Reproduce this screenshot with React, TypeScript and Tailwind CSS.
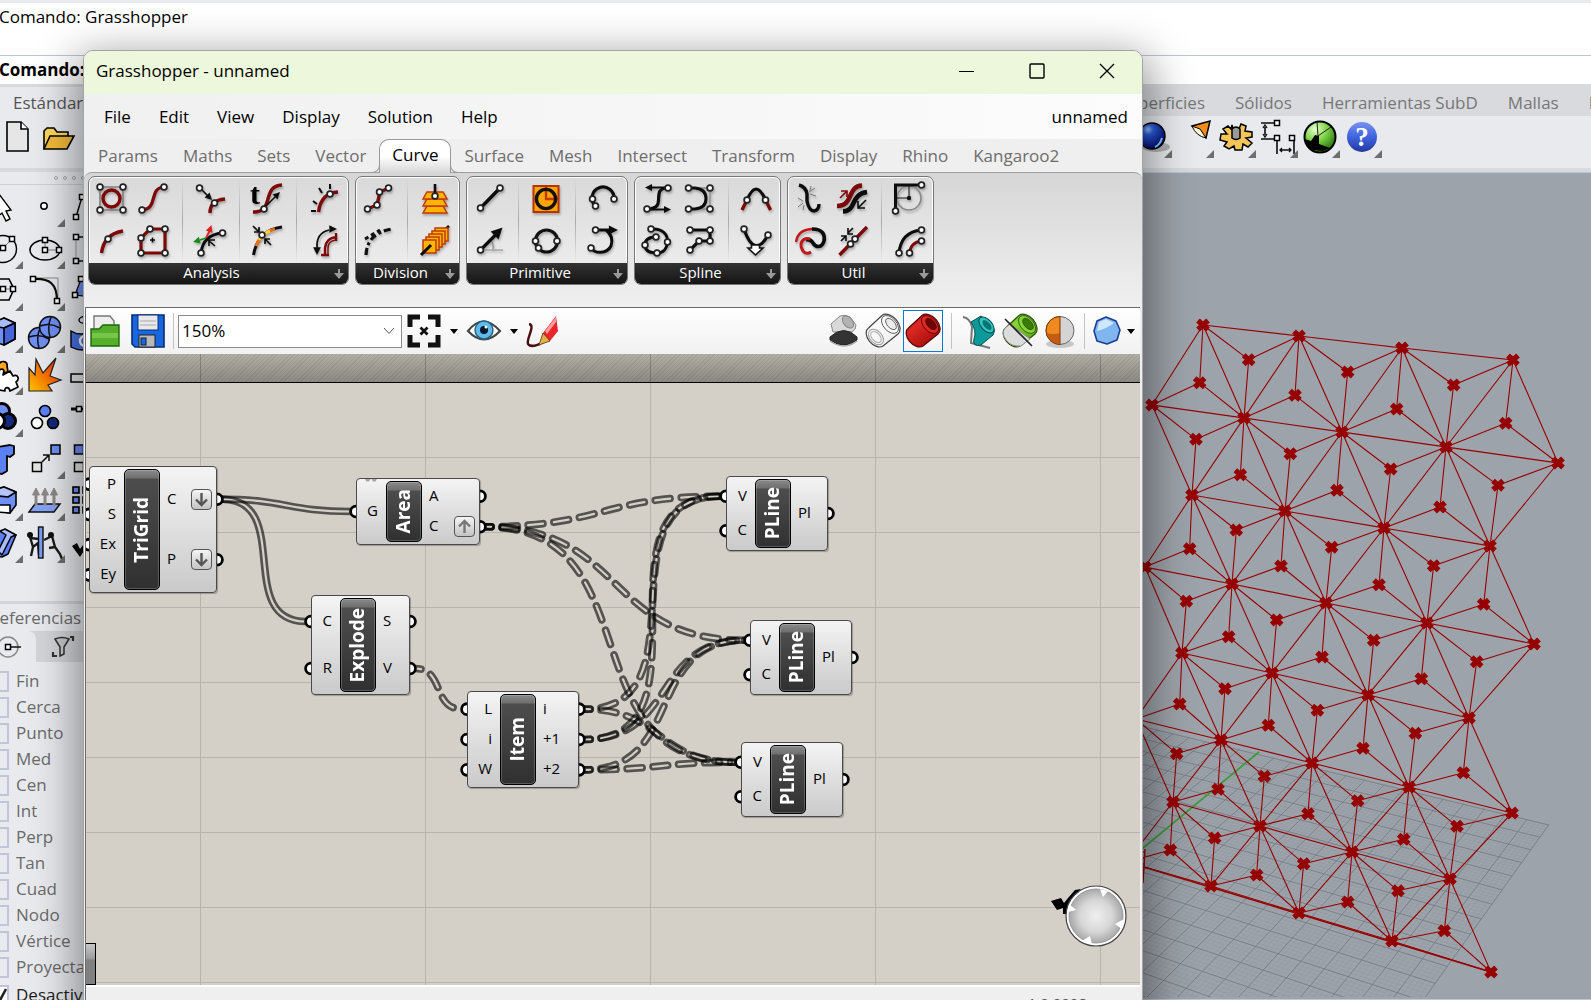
import React, { useState } from 'react';

type Pt = [number, number];

const RED = '#7d0808';

/* ---------- small drawing helpers ---------- */

const Dot = ({ x, y }: { x: number; y: number }) => (
  <circle cx={x} cy={y} r={2.9} fill="#fff" stroke="#222" strokeWidth={1.7} />
);

const Dots = ({ at }: { at: Pt[] }) => (
  <>
    {at.map(([x, y], i) => (
      <Dot key={i} x={x} y={y} />
    ))}
  </>
);

const Sq = ({ x, y }: { x: number; y: number }) => (
  <rect x={x - 2.5} y={y - 2.5} width={5} height={5} fill="#fff" stroke="#000" strokeWidth={1.5} />
);

const Curve = ({ d, c = '#0c0c0c', w = 3 }: { d: string; c?: string; w?: number }) => (
  <path d={d} fill="none" stroke={c} strokeWidth={w} />
);

const Head = ({ x, y, a, c = '#0c0c0c', s = 1 }: { x: number; y: number; a: number; c?: string; s?: number }) => (
  <path d="M0 0L-7 -3.5V3.5Z" fill={c} transform={`translate(${x} ${y}) rotate(${a}) scale(${s})`} />
);

/* ---------- ribbon icons, 42 x 42 ---------- */

const ribbonIcons: Record<string, React.ReactNode> = {
  evalBox: (
    <>
      <rect x={9} y={8} width={23} height={23} fill="none" stroke="#777" strokeWidth={1.4} />
      <circle cx={20.5} cy={19.5} r={8.5} fill="none" stroke={RED} strokeWidth={3.4} />
      <Dots at={[[9, 8], [32, 8], [9, 31], [32, 31]]} />
    </>
  ),
  endPoints: (
    <>
      <Curve d="M9 31C26 30 15 9 31 8" c={RED} w={3.2} />
      <Dots at={[[9, 31], [31, 8]]} />
    </>
  ),
  closest: (
    <>
      <Curve d="M20 34Q20 21 35 20" c={RED} w={3.4} />
      <Curve d="M11 10L19 18" w={1.6} />
      <Head x={22} y={21} a={45} />
      <Dots at={[[9.5, 9], [24.5, 24]]} />
    </>
  ),
  evalCurve: (
    <>
      <Curve d="M6 33C28 34 14 7 35 6" c={RED} w={3.4} />
      <Curve d="M17 29L29 17" w={1.6} />
      <Head x={33} y={13} a={-45} />
      <text x={3} y={25} fontSize={30} fontWeight={700} fontFamily="Liberation Serif, serif">
        t
      </text>
      <Dot x={17} y={30} />
    </>
  ),
  evalLength: (
    <>
      <Curve d="M14.5 33Q17 14 34 13" c={RED} w={3.4} />
      <Curve d="M7 32H12M9 22L13 25M15 9L18 14M26 5V10" w={2} />
      <Dot x={26} y={15} />
    </>
  ),
  middle: (
    <>
      <Curve d="M10.5 32Q13 13 32 10" c={RED} w={3.4} />
      <Dot x={17} y={18} />
    </>
  ),
  polyArea: (
    <>
      <path d="M17 8H32V32H8V17Z" fill="none" stroke={RED} strokeWidth={3.2} />
      <Curve d="M19.5 16.5V21.5M17 19H22" w={1.6} />
      <Dots at={[[17, 8], [32, 8], [32, 32], [8, 32], [8, 17]]} />
    </>
  ),
  frame: (
    <>
      <Curve d="M11 32Q13 14 32 12" />
      <Curve d="M16 17L20 9" c="#d22" w={1.8} />
      <Head x={21.5} y={4} a={-70} c="#d22" />
      <Curve d="M16 17L10 19" c="#1a8a1a" w={1.8} />
      <Head x={3} y={21} a={165} c="#1a8a1a" />
      <Curve d="M18 19L25 25M19 25V19H25" w={1.6} />
      <Dots at={[[11, 32], [32.5, 12]]} />
    </>
  ),
  curvature: (
    <>
      <Curve d="M6.5 34Q11 9 35 6" />
      <path d="M9 25Q15 11 28 8" fill="none" stroke="#f07010" strokeWidth={3.2} />
      <path d="M12 19Q17 12 23 10" fill="none" stroke="#ffd23a" strokeWidth={3} />
      <Curve d="M6 5L12 11M24 24L18 18M12 6V11H7M18 23V18H23" w={1.7} />
      <Dot x={15} y={14} />
    </>
  ),
  torsion: (
    <>
      <Curve d="M13 27Q12 12 25 9" w={1.7} />
      <Head x={13} y={34} a={90} s={1.1} />
      <Head x={33} y={8} a={0} s={1.1} />
      <Curve d="M21 33V27Q22 17 32 16M17 34H25M32 12V20" c={RED} w={2.4} />
      <Curve d="M24 33V27Q24 20 32 19" c={RED} w={1.4} />
    </>
  ),
  divide: (
    <>
      <path d="M9 30L19 26L22 13L31 9" fill="none" stroke={RED} strokeWidth={3.4} />
      <Dots at={[[9.5, 30], [19, 26], [21.5, 13], [30.5, 9]]} />
    </>
  ),
  contour: (
    <>
      {[27, 20, 13].map((y) => (
        <path key={y} d={`M12 ${y}H28L32 ${y + 7}H8Z`} fill="#ffb400" stroke="#c03a00" strokeWidth={1.5} />
      ))}
      <Curve d="M20 5V17" w={2.6} />
      <Dot x={20} y={17} />
    </>
  ),
  dash: (
    <>
      <path d="M8 34Q9 12 34 8" fill="none" stroke="#111" strokeWidth={3.2} strokeDasharray="7 3 3 3" />
      <path d="M7 18L22 9" fill="none" stroke="#111" strokeWidth={3} strokeDasharray="4 3" />
    </>
  ),
  frames: (
    <>
      <Curve d="M26 12L34 5" w={2.6} />
      {[0, 1, 2, 3, 4].map((i) => (
        <rect key={i} x={20 - i * 3} y={7 + i * 3} width={13} height={13} fill="#ffb400" stroke="#c03a00" strokeWidth={1.5} />
      ))}
      <Curve d="M6 34L16 24" w={3} />
    </>
  ),
  line: (
    <>
      <Curve d="M11.5 29L31 9" w={3.4} />
      <Dots at={[[11.5, 29], [31, 9]]} />
    </>
  ),
  circleBox: (
    <>
      <rect x={7.5} y={7} width={25} height={26} fill="#ffa500" stroke="#b83200" strokeWidth={2} />
      <path d="M20 8V20H32" fill="none" stroke="#c23a00" strokeWidth={2.4} />
      <circle cx={20} cy={20} r={9.6} fill="none" stroke="#111" strokeWidth={3.4} />
    </>
  ),
  arc: (
    <>
      <Curve d="M12.5 27A11 11 0 1 1 31 20" w={3.2} />
      <Dots at={[[9.5, 20], [12.5, 27], [31, 20]]} />
    </>
  ),
  lineSdl: (
    <>
      <Curve d="M11.5 29H34M24 28Q25 21 20 18" c="#888" w={1.2} />
      <Curve d="M11.5 29L28 12.5" w={3.2} />
      <Head x={33.5} y={6.5} a={-45} s={1.6} />
      <Dot x={11.5} y={29} />
    </>
  ),
  circle: (
    <>
      <circle cx={20.5} cy={20} r={11} fill="none" stroke="#111" strokeWidth={3.2} />
      <Dots at={[[9.5, 20], [31, 20], [12.5, 27]]} />
    </>
  ),
  arcSed: (
    <>
      <Curve d="M8 27C12 33 24 33 28 25C30 19 28 13 23 9M12 9H28" />
      <Head x={35} y={9} a={0} s={1.3} />
      <Dots at={[[8, 27], [12.5, 9]]} />
    </>
  ),
  bezier: (
    <>
      <Curve d="M10 30C32 30 12 9 31 9" w={3.2} />
      <Curve d="M31 8.5H14M10 30.5H28" w={1.8} />
      <Head x={8} y={8.5} a={180} />
      <Head x={34} y={30.5} a={0} />
      <Dots at={[[31, 9], [10, 30]]} />
    </>
  ),
  nurbs: (
    <>
      <Curve d="M9.5 9H31V30H9.5" c="#888" w={1.3} />
      <Curve d="M9.5 9H16Q27 10 27 19.5T16 30H9.5" />
      <Dots at={[[9.5, 9], [31, 9], [9.5, 30], [31, 30]]} />
    </>
  ),
  catenary: (
    <>
      <Curve d="M11 21Q20 -1 29.5 21" w={3.2} />
      <Curve d="M11 21L6 31M29.5 21L34.5 31" c={RED} w={3.4} />
      <Dots at={[[11, 21], [29.5, 21]]} />
    </>
  ),
  interpolate: (
    <>
      <Curve d="M14 8C26 7 31 14 30.5 21C30 28 26 32 20 32C12 32 8 29 8 24C8 18 13 16 19 16" />
      <Dots at={[[14, 8], [30.5, 21], [20, 32], [8, 24], [19, 16]]} />
    </>
  ),
  polyline: (
    <>
      <Curve d="M11 9H31V20H20L11 29" w={3.2} />
      <Dots at={[[11, 9], [31, 9], [31, 20], [20, 20], [11, 29]]} />
    </>
  ),
  tweak: (
    <>
      <Curve d="M8 8C15 29 24 29 32 14" w={3.2} />
      <path d="M15.5 24H23.5V27H27L19.5 34L12 27H15.5Z" fill="#fff" stroke="#111" strokeWidth={1.6} />
      <Dots at={[[8, 8], [32, 14]]} />
    </>
  ),
  join: (
    <>
      <Curve d="M9 6Q16 8 17 15V22Q19 32 24 32Q29 31 29 25" w={3.4} />
      <Curve d="M19 13L25 9M20 15L26 17M20 12L21 7M13 22L8 19M13 24L8 28M14 26L13 31" c="#777" w={1} />
    </>
  ),
  flip: (
    <>
      <Curve d="M5 27C22 27 15 7 30 6.5" c={RED} w={4.6} />
      <Curve d="M11 32.5C25 32 18 15 35 13" w={4.6} />
      <Curve d="M8 19L14 13M9 12H15V18" c={RED} w={1.6} />
      <Curve d="M34 21L27 28M26 22V29H33" w={1.6} />
    </>
  ),
  fillet: (
    <>
      <circle cx={20} cy={19} r={12} fill="none" stroke="#888" strokeWidth={1.6} />
      <Curve d="M20 7V19H8" w={1} />
      <circle cx={20} cy={19} r={2.2} fill="#111" />
      <Curve d="M6.5 32V6H32" w={3} />
      <Dots at={[[6.5, 32], [32.5, 6]]} />
    </>
  ),
  smooth: (
    <>
      <Curve d="M6 21Q8 8 23 8" c="#c01818" w={2.4} />
      <Curve d="M22 8C34 8 35 15 34 20C32 27 26 27 23 22C21 19 19 18 16 19" w={3.6} />
      <Curve d="M20 18C13 16 9 22 12 28C14 33 18 33 21 31" c="#c01818" w={3} />
    </>
  ),
  seam: (
    <>
      <Curve d="M7.5 34L35 6" c={RED} w={3.4} />
      <Curve d="M9 20L14 15M9 15H14V20M21 7L16 12M16 7V13H21" w={1.6} />
      <Dots at={[[18.5, 23], [23, 18]]} />
    </>
  ),
  offset: (
    <>
      <Curve d="M10 32Q12 11 32.5 9" />
      <Curve d="M20.5 32Q22 21 32.5 20" c={RED} />
      <Dots at={[[10, 32], [32.5, 9], [20.5, 32], [32.5, 20]]} />
    </>
  ),
};

const ribbonGroups: { name: string; columns: string[][][] }[] = [
  {
    name: 'Analysis',
    columns: [
      [['evalBox', 'middle'], ['endPoints', 'polyArea']],
      [['closest', 'frame']],
      [['evalCurve', 'curvature']],
      [['evalLength', 'torsion']],
    ],
  },
  { name: 'Division', columns: [[['divide', 'dash']], [['contour', 'frames']]] },
  { name: 'Primitive', columns: [[['line', 'lineSdl']], [['circleBox', 'circle']], [['arc', 'arcSed']]] },
  { name: 'Spline', columns: [[['bezier', 'interpolate'], ['nurbs', 'polyline']], [['catenary', 'tweak']]] },
  { name: 'Util', columns: [[['join', 'smooth'], ['flip', 'seam']], [['fillet', 'offset']]] },
];

/* ---------- Rhino sidebar icons, 42 x 42 ---------- */

const BLUE = '#6f8ff5';

const sideIcons: { icon: React.ReactNode; more?: boolean }[] = [
  { icon: <path d="M14 5L29 25L24 26L28 34L24 36L20 28L14 33Z" fill="#fff" stroke="#000" strokeWidth={1.4} /> },
  { icon: <circle cx={20} cy={21} r={3.2} fill="#fff" stroke="#000" strokeWidth={1.5} />, more: true },
  { icon: <><Curve d="M10 32L16 12" w={1.5} /><Sq x={16} y={12} /><Sq x={10} y={32} /></> },
  {
    icon: <><circle cx={21} cy={22} r={13.5} fill="none" stroke="#000" strokeWidth={1.4} /><Curve d="M21 21L30 12" c="#777" w={1} /><Sq x={21} y={21} /><Sq x={30} y={12} /></>,
    more: true,
  },
  {
    icon: <><ellipse cx={21} cy={23} rx={15} ry={10} fill="none" stroke="#000" strokeWidth={1.6} /><Curve d="M21 13V23H35" c="#777" w={1} /><Sq x={21} y={13} /><Sq x={21} y={23} /><Sq x={35} y={23} /></>,
    more: true,
  },
  { icon: <><Curve d="M10 10V34" c="#999" w={1} /><Curve d="M10 10H24M10 34H24" w={1.5} /><Sq x={10} y={10} /><Sq x={10} y={34} /></> },
  {
    icon: <><path d="M15 10H27L32 20L27 31H15L10 20Z" fill="none" stroke="#000" strokeWidth={1.6} /><Curve d="M21 20H31" c="#777" w={1} /><Sq x={21} y={20} /><Sq x={31} y={20} /></>,
    more: true,
  },
  {
    icon: <><Curve d="M9 9H34V32" c="#888" w={1} /><Curve d="M9 10C26 9 33 15 33 32" w={2.2} /><Sq x={9} y={10} /><Sq x={33} y={32} /></>,
    more: true,
  },
  { icon: <><path d="M15 10L26 14V28L9 26Z" fill={BLUE} stroke="#000" strokeWidth={1.2} /><Sq x={15} y={10} /><Sq x={9} y={26} /></> },
  {
    icon: <g stroke="#000" strokeWidth={1.6} strokeLinejoin="round"><path d="M6 14L22 7L33 12V28L22 34L6 29Z" fill={BLUE} /><path d="M6 14L22 7L33 12L22 17Z" fill="#a9bcff" /><path d="M33 12V28L22 34V17Z" fill="#4464d8" /></g>,
    more: true,
  },
  {
    icon: (
      <g stroke="#111" strokeWidth={1.5}>
        <circle cx={15} cy={27} r={10.5} fill={BLUE} />
        <path d="M5 26Q15 22 25 28M16 17Q12 27 15 37" fill="none" />
        <circle cx={26} cy={16} r={10.5} fill={BLUE} />
        <path d="M16 15Q26 11 36 17M27 6Q23 16 26 26" fill="none" />
      </g>
    ),
    more: true,
  },
  { icon: <><path d="M5 20Q16 27 28 18V36Q16 42 5 36Z" fill="#4a74e6" stroke="#000" strokeWidth={1.4} /><circle cx={19} cy={30} r={5} fill="none" stroke="#fff" strokeWidth={2.4} /><ellipse cx={19} cy={9} rx={6} ry={3.5} fill="none" stroke="#000" strokeWidth={1.4} /></> },
  {
    icon: (
      <g stroke="#000" strokeWidth={1.7} strokeLinejoin="round">
        <path d="M10 10C13 6 17 6 18 10C21 7 26 9 25 13L26 19L12 21Z" fill="#ffa81e" />
        <path d="M8 22L17 20C16 16 21 15 22 18L21 22L28 18L31 23C36 21 38 26 34 29L36 34L28 38C27 33 22 34 23 38L12 36Z" fill="#fff" />
      </g>
    ),
    more: true,
  },
  {
    icon: (
      <>
        <defs>
          <linearGradient id="boom" x1="0" y1="1" x2="1" y2="0"><stop offset="0" stopColor="#ffc400" /><stop offset="1" stopColor="#f02000" /></linearGradient>
        </defs>
        <path d="M5 38L5 15L11 22L12 6L19 20L32 5L26 23L37 27L24 32L28 38Z" fill="url(#boom)" stroke="#222" strokeWidth={1.2} />
      </>
    ),
  },
  { icon: <rect x={5} y={21} width={20} height={8} fill="#e8e8e8" stroke="#111" strokeWidth={1.6} /> },
  {
    icon: <g stroke="#000" strokeWidth={3}><circle cx={20} cy={16} r={7.5} fill={BLUE} /><circle cx={26} cy={26} r={7.5} fill="#12297c" /><circle cx={15} cy={26} r={7.5} fill="#fff" /></g>,
    more: true,
  },
  { icon: <g stroke="#000" strokeWidth={1.6}><circle cx={21} cy={16} r={5.5} fill="#5c82f5" /><circle cx={13} cy={28} r={5.5} fill="#fff" /><circle cx={29} cy={28} r={5.5} fill="#12297c" /></g> },
  { icon: <><Curve d="M5 14H26" w={3} /><Sq x={13} y={14} /></> },
  { icon: <path d="M4 12L28 8L32 9V17L28 20L25 19V34L20 37L14 36V17L4 19Z" fill="#5a80f2" stroke="#000" strokeWidth={1.8} strokeLinejoin="round" /> },
  {
    icon: <><rect x={27} y={8} width={9} height={9} fill={BLUE} stroke="#000" strokeWidth={1.5} /><rect x={8.5} y={25.5} width={9} height={9} fill="#e4e4e0" stroke="#000" strokeWidth={1.5} /><Curve d="M18 25L25 18M19 18H25V24" w={1.5} /></>,
    more: true,
  },
  { icon: <><rect x={8.5} y={8} width={9} height={9} fill={BLUE} stroke="#000" strokeWidth={1.5} /><rect x={8.5} y={25.5} width={9} height={9} fill="#e4e4e0" stroke="#000" strokeWidth={1.5} /></> },
  {
    icon: <g stroke="#000" strokeWidth={1.6} strokeLinejoin="round"><path d="M8 12L22 8L34 13V26L28 34L8 31Z" fill={BLUE} /><path d="M8 12L22 8L34 13L26 18L8 16Z" fill="#b3c3ff" /><path d="M14 26L28 26V34L14 33Z" fill="#fff" /></g>,
    more: true,
  },
  {
    icon: <><path d="M11 25H36L30 33H5Z" fill="#86a3f5" stroke="#111" strokeWidth={1.5} /><path d="M11 26V16H8.5L12 9L15.5 16H13V26ZM20 26V16H17.5L21 9L24.5 16H22V26ZM29 26V16H26.5L30 9L33.5 16H31V26Z" fill="#8d8886" stroke="#8d8886" /></>,
    more: true,
  },
  {
    icon: <g stroke="#000" strokeWidth={1.6}>{[11, 21, 31].map((y) => <g key={y}><rect x={7} y={y - 3} width={6} height={6} fill={BLUE} /><rect x={17} y={y - 3} width={6} height={6} fill={BLUE} /></g>)}</g>,
  },
  {
    icon: <g stroke="#000" strokeWidth={1.5} strokeLinejoin="round"><path d="M10 30L18 10L34 14L26 33L20 36L10 35Z" fill="#5a80f2" /><path d="M18 10L23 8L34 14L29 16L20 34L16 30L24 14Z" fill="#a9bcff" /></g>,
    more: true,
  },
  {
    icon: (
      <>
        <g stroke="#1b1b1b" strokeWidth={2.4} fill="none"><path d="M6 16L9 26L14 22L15 34M6 17L15 18M9 26L7 35M28 15L20 19M28 15L31 26L36 33L38 38M31 26L25 27" /></g>
        <circle cx={6} cy={14} r={3} fill="#111" /><circle cx={27} cy={14} r={3} fill="#111" />
        <rect x={14.5} y={6} width={4.5} height={31} fill="#7c9cf5" stroke="#111" strokeWidth={1.4} />
      </>
    ),
    more: true,
  },
  { icon: <path d="M6 25L11 22L14 28L26 12L27 16L14 36Z" fill="#000" /> },
];

/* ---------- Rhino top toolbar icons ---------- */

function ToolCell({ label, children, more = true }: { label: string; children: React.ReactNode; more?: boolean }) {
  return (
    <button aria-label={label} className="size-[42px] shrink-0">
      <svg viewBox="0 0 42 42" className="size-full">
        {children}
        {more && <path d="M41 34V42H33Z" fill="#6e6e6e" />}
      </svg>
    </button>
  );
}

const RightTools = () => (
  <>
    <ToolCell label="Render">
      <defs>
        <radialGradient id="ball" cx="35%" cy="25%" r="80%"><stop offset="0" stopColor="#9cc4ff" /><stop offset=".25" stopColor="#2a5fe0" /><stop offset="1" stopColor="#020060" /></radialGradient>
      </defs>
      <ellipse cx={25} cy={31} rx={14} ry={5} fill="#888" opacity={0.6} />
      <circle cx={21} cy={20} r={13} fill="url(#ball)" stroke="#000" strokeWidth={1.4} />
      <path d="M31 22Q29 29 24 31" stroke="#7ad0ff" strokeWidth={2} fill="none" />
    </ToolCell>
    <ToolCell label="Light">
      <path d="M19 10L37 5L33 22Z" fill="#f08c1a" stroke="#000" strokeWidth={1.5} />
      <path d="M19 10Q23 20 33 22L27 13Z" fill="#fff6d8" stroke="#000" strokeWidth={1} />
    </ToolCell>
    <ToolCell label="Options">
      <g transform="translate(21 21)" fill="#f5c55a" stroke="#000" strokeWidth={1.5}>
        <path d="M-4 -12L-3 -8L3 -8L5 -13L10 -11L9 -6L16 -5V0L10 1L16 6L12 10L7 7L6 13L-1 13L-2 9L-7 12L-12 9L-9 5L-16 3L-15 -3L-9 -3L-13 -8L-8 -11L-5 -8Z" />
        <path d="M-4 1V-8Q0 -12 4 -8V1Q0 4 -4 1Z" fill="#999" />
      </g>
    </ToolCell>
    <ToolCell label="Dimensions">
      <Curve d="M4 7H20M4 23H20M20 23V38M37 23V38M8 11V19" w={1.6} />
      <Curve d="M6 12L8 9L10 12M6 18L8 21L10 18M23 34H33M25 32L23 34L25 36M32 32L34 34L32 36" w={1.3} />
      <Sq x={20} y={7} /><Sq x={20} y={22} /><Sq x={35} y={22} />
    </ToolCell>
    <ToolCell label="Grasshopper">
      <defs>
        <radialGradient id="gh" cx="35%" cy="25%" r="75%"><stop offset="0" stopColor="#e8ffd0" /><stop offset=".5" stopColor="#7ed348" /><stop offset="1" stopColor="#2c7a10" /></radialGradient>
      </defs>
      <circle cx={21} cy={21} r={15.5} fill="url(#gh)" stroke="#000" strokeWidth={2} />
      <path d="M6 23L12 25L16 19L20 20L20 28L31 32L24 35L14 34L8 29Z" fill="#000" />
      <path d="M19 20L18 6M19 20L32 11" stroke="#222" strokeWidth={1} />
    </ToolCell>
    <ToolCell label="Help">
      <defs>
        <linearGradient id="hp" x1="0" y1="0" x2="0" y2="1"><stop offset="0" stopColor="#7a92ee" /><stop offset=".5" stopColor="#3f63e0" /><stop offset="1" stopColor="#23399c" /></linearGradient>
      </defs>
      <circle cx={21} cy={21} r={15} fill="url(#hp)" />
      <text x={21} y={30} textAnchor="middle" fontSize={27} fontWeight={700} fill="#fff" fontFamily="Liberation Serif, serif">?</text>
    </ToolCell>
  </>
);

/* ---------- viewport mesh ---------- */

const rows: Pt[][] = [
  [[1203, 325], [1299, 336], [1402, 348], [1513, 360]],
  [[1152, 405], [1244, 418], [1342, 432], [1446, 447], [1558, 463]],
  [[1192, 495], [1285, 511], [1384, 528], [1490, 546]],
  [[1145, 567], [1232, 584], [1326, 603], [1427, 623], [1534, 644]],
  [[1182, 653], [1272, 673], [1368, 695], [1469, 718]],
  [[1136, 719], [1221, 740], [1312, 763], [1409, 787], [1512, 813]],
  [[1173, 802], [1260, 826], [1352, 852], [1450, 879]],
  [[1127, 862], [1211, 886], [1299, 913], [1392, 941], [1491, 972]],
];

const triangles: Pt[][] = [];
for (let r = 0; r < rows.length - 1; r++) {
  const short = rows[r].length < rows[r + 1].length ? rows[r] : rows[r + 1];
  const long = short === rows[r] ? rows[r + 1] : rows[r];
  for (let i = 0; i < short.length; i++) {
    triangles.push([short[i], long[i], long[i + 1]]);
    if (i + 1 < short.length) triangles.push([short[i], short[i + 1], long[i + 1]]);
  }
}
const centroid = (t: Pt[]): Pt => [(t[0][0] + t[1][0] + t[2][0]) / 3, (t[0][1] + t[1][1] + t[2][1]) / 3];
const meshPath = triangles
  .map((t) => {
    const [cx, cy] = centroid(t);
    return `M${t.map((p) => p.join(' ')).join('L')}Z` + t.map((p) => `M${cx} ${cy}L${p.join(' ')}`).join('');
  })
  .join('');
const markers = [...rows.flat(), ...triangles.map(centroid)];

// Ground plane in perspective: one family of lines per vanishing point
const VP_LEFT: Pt = [-1023, 202];
const VP_RIGHT: Pt = [2115, 34];
const planeLines = (step: number) => {
  let d = '';
  for (let i = 0; i <= 150 / step; i++) {
    const dist = 1 / (1 / 2572 + (i * step * 22) / (2572 * 2572));
    const x = VP_LEFT[0] + dist;
    const y = VP_LEFT[1] + dist * 0.242;
    const m = (y - VP_RIGHT[1]) / (x - VP_RIGHT[0]);
    d += `M${x.toFixed(1)} ${y.toFixed(1)}L${(x - 700).toFixed(1)} ${(y - 700 * m).toFixed(1)}`;
  }
  for (let i = 0; i <= 26 / step; i++) {
    const dist = 1 / (1 / 791 - (i * step * 12) / (791 * 791));
    const y = VP_RIGHT[1] + dist;
    const x = VP_RIGHT[0] - dist / 1.397;
    const m = (y - VP_LEFT[1]) / (x - VP_LEFT[0]);
    d += `M${x.toFixed(1)} ${y.toFixed(1)}L900 ${(y - (x - 900) * m).toFixed(1)}`;
  }
  return d;
};

const Viewport = () => (
  <main className="relative min-w-0 flex-1 overflow-hidden border-y border-[#b9c6dc] bg-[#9da3aa]">
    <svg viewBox="120 173 1471 824" className="h-[824px] w-[1471px]" fill="none">
      <path d={planeLines(0.2)} stroke="#7d838a" strokeWidth={0.5} opacity={0.35} />
      <path d={planeLines(1)} stroke="#747a81" strokeWidth={1} opacity={0.75} />
      <path d="M1143 848L1259 752" stroke="#3f9a3f" strokeWidth={1.8} />
      <path d={meshPath} stroke="#960000" strokeWidth={1.1} />
      <path d="M1127 862L1491 972M1145 849L1143 883M1142 852H1145M1142 858H1145M1142 864H1145M1142 870H1144M1142 876H1144" stroke="#960000" strokeWidth={1.4} />
      {markers.map(([x, y], i) => (
        <path key={i} d={`M${x - 5} ${y - 4.5}L${x + 5} ${y + 4.5}M${x + 5} ${y - 4.5}L${x - 5} ${y + 4.5}`} stroke="#960000" strokeWidth={5.4} />
      ))}
    </svg>
  </main>
);

/* ---------- Grasshopper canvas ---------- */

interface GhNode {
  id: string;
  title: string;
  x: number;
  y: number;
  w: number;
  h: number;
  inW: number;
  inputs: string[];
  outputs: { name: string; flag?: 'down' | 'up' }[];
}

// Positions are relative to the canvas body
const nodes: GhNode[] = [
  { id: 'tri', title: 'TriGrid', x: 3, y: 83, w: 128, h: 127, inW: 34, inputs: ['P', 'S', 'Ex', 'Ey'], outputs: [{ name: 'C', flag: 'down' }, { name: 'P', flag: 'down' }] },
  { id: 'area', title: 'Area', x: 270, y: 95, w: 124, h: 67, inW: 29, inputs: ['G'], outputs: [{ name: 'A' }, { name: 'C', flag: 'up' }] },
  { id: 'explode', title: 'Explode', x: 225, y: 212, w: 99, h: 100, inW: 28, inputs: ['C', 'R'], outputs: [{ name: 'S' }, { name: 'V' }] },
  { id: 'item', title: 'Item', x: 381, y: 308, w: 112, h: 97, inW: 32, inputs: ['L', 'i', 'W'], outputs: [{ name: 'i' }, { name: '+1' }, { name: '+2' }] },
  { id: 'pl1', title: 'PLine', x: 640, y: 93, w: 102, h: 75, inW: 28, inputs: ['V', 'C'], outputs: [{ name: 'Pl' }] },
  { id: 'pl2', title: 'PLine', x: 664, y: 237, w: 102, h: 75, inW: 28, inputs: ['V', 'C'], outputs: [{ name: 'Pl' }] },
  { id: 'pl3', title: 'PLine', x: 655, y: 359, w: 102, h: 75, inW: 28, inputs: ['V', 'C'], outputs: [{ name: 'Pl' }] },
];

const port = (id: string, side: 'in' | 'out', i: number): Pt => {
  const n = nodes.find((k) => k.id === id)!;
  const count = side === 'in' ? n.inputs.length : n.outputs.length;
  return [side === 'in' ? n.x : n.x + n.w, n.y + 3 + ((n.h - 6) / count) * (i + 0.5)];
};

const wires: [string, number, string, number, boolean][] = [
  ['tri', 0, 'area', 0, false],
  ['tri', 0, 'explode', 0, false],
  ['explode', 1, 'item', 0, true],
  ['area', 1, 'pl1', 0, true],
  ['area', 1, 'pl2', 0, true],
  ['area', 1, 'pl3', 0, true],
  ['item', 0, 'pl1', 0, true],
  ['item', 0, 'pl3', 0, true],
  ['item', 1, 'pl1', 0, true],
  ['item', 1, 'pl2', 0, true],
  ['item', 2, 'pl2', 0, true],
  ['item', 2, 'pl3', 0, true],
];

const Wires = () => (
  <svg className="absolute inset-0 size-full" fill="none">
    {wires.map(([a, ai, b, bi, dashed], i) => {
      const [x1, y1] = port(a, 'out', ai);
      const [x2, y2] = port(b, 'in', bi);
      const k = Math.hypot(x2 - x1, y2 - y1) / 2;
      const d = `M${x1 + 5} ${y1}C${x1 + k} ${y1} ${x2 - k} ${y2} ${x2 - 5} ${y2}`;
      const dash = dashed ? { strokeDasharray: '15 11', strokeDashoffset: 9, strokeLinecap: 'round' as const } : {};
      return (
        <g key={i}>
          <mask id={`wire-${i}`} maskUnits="userSpaceOnUse" x={0} y={0} width={1100} height={700}>
            <path d={d} stroke="#fff" strokeWidth={7.6} {...dash} />
            <path d={d} stroke="#000" strokeWidth={2.2} {...dash} />
          </mask>
          <rect width={1100} height={700} fill="#000" fillOpacity={0.6} mask={`url(#wire-${i})`} />
        </g>
      );
    })}
    {nodes.map((n) =>
      [...n.inputs.map((_, i) => port(n.id, 'in', i)), ...n.outputs.map((_, i) => port(n.id, 'out', i))].map(([x, y], i) => (
        <circle key={n.id + i} cx={x} cy={y} r={5.4} fill="#fff" stroke="#000" strokeWidth={2.8} />
      )),
    )}
  </svg>
);

const Component = ({ node }: { node: GhNode }) => (
  <div
    className="absolute flex rounded-[4px] border border-[#4a4a4a] bg-gradient-to-b from-[#f4f4f4] to-[#cacaca] py-[2px] text-[15px] leading-none text-black shadow-[1px_1px_1px_#0004]"
    style={{ left: node.x, top: node.y, width: node.w, height: node.h }}
  >
    {node.id === 'area' && (
      <svg viewBox="0 0 12 3" className="absolute left-2 top-0 h-[3px] w-3">
        <path d="M0 0H5.5L4 2.500H1.500ZM6.500 0H12L10.500 2.500H8Z" fill="#a5a5a5" />
      </svg>
    )}
    <div className="flex flex-col pr-2" style={{ width: node.inW }}>
      {node.inputs.map((name) => (
        <div key={name} className="flex flex-1 items-center justify-end pb-[2px]">{name}</div>
      ))}
    </div>
    <div className="flex w-9 items-center justify-center rounded-[5px] border border-black bg-[linear-gradient(#8a8a8a,#6f6f6f_8px,#4d4d4d_9px,#303030)] pr-[2px] shadow-[inset_0_0_0_1px_#fff3]">
      <span className="rotate-180 text-[19px] font-bold leading-none text-white [writing-mode:vertical-rl]">{node.title}</span>
    </div>
    <div className="flex flex-1 flex-col pl-[7px] pr-1">
      {node.outputs.map((o) => (
        <div key={o.name} className="flex flex-1 items-center justify-between">
          <span className="pb-[2px]">{o.name}</span>
          {o.flag && (
            <button
              aria-label={o.flag === 'down' ? 'Flatten' : 'Graft'}
              className="size-[21px] rounded-[4px] border border-[#555] bg-gradient-to-b from-[#f5f5f5] to-[#c4c4c4]"
            >
              <svg viewBox="0 0 19 19" className={o.flag === 'up' ? 'size-full rotate-180' : 'size-full'} fill="none">
                <path d="M9.500 3V14M4 9.500L9.500 15L15 9.500" stroke={o.flag === 'up' ? '#777' : '#555'} strokeWidth={2.4} />
              </svg>
            </button>
          )}
        </div>
      ))}
    </div>
  </div>
);

const Compass = () => (
  <svg viewBox="0 0 80 64" className="absolute bottom-[37px] right-3 h-16 w-20">
    <defs>
      <radialGradient id="dial"><stop offset="0" stopColor="#efefef" /><stop offset=".6" stopColor="#d6d6d6" /><stop offset="1" stopColor="#a8a8a8" /></radialGradient>
    </defs>
    <path d="M3 17L13 14L16 19L20 14L27 6L33 5L24 14L19 30L15 30L15 24L9 26Z" fill="#000" />
    <circle cx={48} cy={32} r={30} fill="#fff" stroke="#444" strokeWidth={1.2} />
    <circle cx={48} cy={32} r={27} fill="url(#dial)" stroke="#999" />
    <path d="M52 5L60 7L55 13ZM76 35L67 40L74 45ZM42 52L44 60L34 57ZM21 20L28 26L20 28Z" fill="#fff" />
  </svg>
);

/* ---------- Grasshopper canvas toolbar icons ---------- */

const BarButton = ({ label, children, active }: { label: string; children: React.ReactNode; active?: boolean }) => (
  <button
    aria-label={label}
    className={active ? 'flex h-[42px] w-10 items-center justify-center border border-[#0a7ad8]' : 'flex h-[42px] w-10 items-center justify-center'}
  >
    <svg viewBox="0 0 36 36" className="size-9 shrink-0">{children}</svg>
  </button>
);

const DropArrow = () => (
  <svg viewBox="0 0 8 5" className="h-[5px] w-2 shrink-0">
    <path d="M0 0H8L4 5Z" />
  </svg>
);

const Cylinder = ({ id, light, dark, hole, line }: { id: string; light: string; dark: string; hole: string; line: string }) => (
  <g stroke={line} strokeWidth={1.2}>
    <defs>
      <linearGradient id={id} x1="0" y1="0" x2=".8" y2="1"><stop offset="0" stopColor={dark} /><stop offset=".35" stopColor={light} /><stop offset="1" stopColor={dark} /></linearGradient>
    </defs>
    <path d="M17 2.5L3.500 15A7.500 11.500 -42 0 0 18 33L33 21A7.500 11.500 -42 0 0 17 2.5Z" fill={`url(#${id})`} strokeLinejoin="round" />
    <ellipse cx={25} cy={11.5} rx={6.5} ry={10.5} transform="rotate(-42 25 11.5)" fill={light} strokeWidth={0.8} />
    <ellipse cx={26} cy={11} rx={3.8} ry={6.8} transform="rotate(-42 26 11)" fill={hole} strokeWidth={0.8} />
  </g>
);

const Sep = () => <span className="h-9 w-px bg-[#c4c4c4]" />;

const CanvasToolbar = () => {
  const [zoom, setZoom] = useState('150%');
  return (
    <div className="flex h-[46px] items-center bg-gradient-to-b from-white to-[#f1f1f1]">
      <BarButton label="Open file">
        <path d="M6 20V3H22L26 8V20Z" fill="#eee" stroke="#777" strokeWidth={1.4} />
        <path d="M3 16H11L15 12H31V33H3Z" fill="#57ae2a" stroke="#1d6a0c" strokeWidth={1.4} />
        <path d="M4 20H30V25H4Z" fill="#8ed65f" opacity={0.6} />
      </BarButton>
      <span className="w-px" />
      <BarButton label="Save file">
        <path d="M3 2H35V34H6L3 31Z" fill="#1667e0" stroke="#0b2b78" strokeWidth={1.6} />
        <rect x={9} y={2} width={20} height={15} fill="#e9e9e9" stroke="#0b2b78" />
        <path d="M11 8H27M11 12H27" stroke="#aaa" strokeWidth={1.2} />
        <rect x={10} y={22} width={16} height={12} fill="#b9b9b9" stroke="#222" />
        <rect x={12} y={25} width={5} height={7} fill="#1667e0" stroke="#123" />
      </BarButton>
      <span className="w-[6px]" />
      <Sep />
      <div className="relative ml-1">
        <select
          aria-label="Zoom"
          value={zoom}
          onChange={(e) => setZoom(e.target.value)}
          className="block h-[33px] w-[224px] appearance-none border border-[#8a8a8a] bg-white pl-[3px] text-[17px]"
        >
          <option>100%</option>
          <option>150%</option>
          <option>200%</option>
        </select>
        <svg viewBox="0 0 12 8" className="pointer-events-none absolute right-[7px] top-3 h-2 w-3" fill="none">
          <path d="M1 1L6 6.500L11 1" stroke="#555" />
        </svg>
      </div>
      <span className="w-[2px]" />
      <BarButton label="Zoom extents">
        <path d="M4 14V4H14M22 4H32V14M32 22V32H22M14 32H4V22" fill="none" stroke="#111" strokeWidth={5} />
        <path d="M14.500 14.500L21.500 21.500M21.500 14.500L14.500 21.500" stroke="#111" strokeWidth={2.8} />
      </BarButton>
      <span className="w-[6px]" />
      <DropArrow />
      <span className="w-[6px]" />
      <BarButton label="Named views">
        <path d="M2 18Q17 -1 34 18Q18 35 2 18Z" fill="#fff" stroke="#444" strokeWidth={2.2} />
        <circle cx={18} cy={17} r={9} fill="#5fbbe8" stroke="#23607f" strokeWidth={1.4} />
        <circle cx={18} cy={17} r={4} fill="#0a1730" />
        <circle cx={20} cy={14} r={1.5} fill="#fff" />
      </BarButton>
      <span className="w-[6px]" />
      <DropArrow />
      <span className="w-1" />
      <BarButton label="Sketch">
        <path d="M5 11C12 12 2 26 4 31C7 35 12 32 16 31" fill="none" stroke="#4a1010" strokeWidth={2.4} />
        <path d="M15 32L19 20L32 3L34 18L26 28Z" fill="#e8262c" />
        <path d="M15 32L19 20L26 28Z" fill="#e0b04a" stroke="#5a3a10" strokeWidth={0.8} />
        <path d="M21 18L32 4L32 9L23 21Z" fill="#ff9a9a" />
      </BarButton>

      <div className="ml-auto flex items-center">
        <BarButton label="No preview">
          <g stroke="#888"><path d="M6 11L15 3Q20 1 25 4L31 12Q31 17 27 19H8Z" fill="#d9d9d9" /><ellipse cx={23} cy={9} rx={4.5} ry={7} transform="rotate(-40 23 9)" fill="#b2b2b2" /></g>
          <path d="M5 24Q19 11 32 24V27Q19 37 5 27Z" fill="#333" stroke="#222" />
          <path d="M5 28Q19 38 32 28" fill="none" stroke="#aaa" strokeWidth={1.5} />
        </BarButton>
        <BarButton label="Wireframe preview">
          <Cylinder id="cyl-wire" light="#fbfbfb" dark="#eeeeee" hole="#ececec" line="#444" />
          <ellipse cx={11} cy={24} rx={6} ry={9} transform="rotate(-42 11 24)" fill="none" stroke="#999" />
          <ellipse cx={11} cy={24} rx={4} ry={6.5} transform="rotate(-42 11 24)" fill="none" stroke="#aaa" />
        </BarButton>
        <BarButton label="Shaded preview" active>
          <Cylinder id="cyl-red" light="#dc2a24" dark="#a00808" hole="#6e0404" line="#5a0000" />
        </BarButton>
        <span className="w-2" />
        <Sep />
        <span className="w-2" />
        <BarButton label="Document preview settings">
          <path d="M1 4Q8 5 10 14L9 30L28 35" fill="none" stroke="#777" strokeWidth={2} />
          <path d="M9 9L19 3L31 13Q34 18 31 22L19 32Q10 34 12 26Q15 18 9 9Z" fill="#0e9a9a" stroke="#075050" />
          <ellipse cx={24.5} cy={12} rx={5.5} ry={9.5} transform="rotate(-42 24.500 12)" fill="#2fc4c0" stroke="#075050" />
          <ellipse cx={25} cy={12} rx={3} ry={6} transform="rotate(-42 25 12)" fill="#0a7474" />
        </BarButton>
        <BarButton label="Selected preview">
          <Cylinder id="cyl-green" light="#86d436" dark="#55a010" hole="#3a7a08" line="#2a5008" />
          <path d="M8 11L28 26L19 33Q9 34 4 27Q-1 20 3 15Z" fill="#dcdcdc" stroke="#888" />
          <path d="M3 6L30 33" stroke="#222" strokeWidth={1.6} />
        </BarButton>
        <BarButton label="Mesh quality">
          <ellipse cx={18} cy={31} rx={14} ry={4} fill="#999" opacity={0.5} />
          <circle cx={18} cy={17.5} r={14} fill="#d4d4d4" stroke="#666" />
          <path d="M18 3.500A14 14 0 0 0 18 31.500Z" fill="#f08a1e" stroke="#7a3000" />
          <path d="M4.500 20Q11 22 18 20V31Q8 31 4.500 20Z" fill="#b0480f" opacity={0.7} />
        </BarButton>
        <span className="w-1" />
        <Sep />
        <span className="w-[2px]" />
        <BarButton label="Preview mesh">
          <path d="M17 4L27 8L31 17L28 27L18 31L8 28L5 18L8 8Z" fill="#7fb6f0" stroke="#1c3f94" strokeWidth={1.6} strokeLinejoin="round" />
          <path d="M10 9L17 6L25 10Q17 16 8 18Z" fill="#cfe6ff" />
        </BarButton>
        <DropArrow />
        <span className="w-[5px]" />
      </div>
    </div>
  );
};

/* ---------- Grasshopper window ---------- */

const menus = ['File', 'Edit', 'View', 'Display', 'Solution', 'Help'];
const tabs = ['Params', 'Maths', 'Sets', 'Vector', 'Curve', 'Surface', 'Mesh', 'Intersect', 'Transform', 'Display', 'Rhino', 'Kangaroo2'];

const Ribbon = () => (
  <div className="flex h-[135px] items-start gap-[6px] rounded-t-lg border-t border-[#a0a0a0] bg-gradient-to-b from-[#d6d6d6] to-[#f0f0f0] pl-1 pt-[3px]">
    {ribbonGroups.map((g) => (
      <section key={g.name} className="overflow-hidden rounded-[7px] border border-[#777] bg-gradient-to-b from-[#d9d9d9] to-[#f0f0f0] shadow-[inset_0_0_0_1px_#fff]">
        <div className="flex h-[86px] px-[2px] pt-[2px]">
          {g.columns.map((block, b) => (
            <React.Fragment key={b}>
              {b > 0 && <span className="mx-[7px] w-px bg-gradient-to-b from-transparent via-[#aaa] to-transparent" />}
              {block.map((col) => (
                <div key={col[0]} className="flex flex-col">
                  {col.map((name) => (
                    <button key={name} aria-label={name} className="size-[42px]">
                      <svg viewBox="0 0 42 42" className="size-full drop-shadow-[1px_2px_1px_#0004]">{ribbonIcons[name]}</svg>
                    </button>
                  ))}
                </div>
              ))}
            </React.Fragment>
          ))}
        </div>
        <div className="flex h-[21px] items-center bg-gradient-to-b from-[#333] to-[#151515] text-[15px] leading-none text-white">
          <span className="flex-1 pb-[2px] text-center">{g.name}</span>
          <svg viewBox="0 0 10 12" className="mr-1 h-3 w-[10px]"><path d="M4 1H6V5H10L5 11L0 5H4Z" fill="#999" /></svg>
        </div>
      </section>
    ))}
  </div>
);

const GrasshopperWindow = () => (
  <div className="absolute -bottom-10 left-[83px] top-[50px] flex w-[1060px] flex-col overflow-hidden rounded-t-[10px] border border-[#a3a5a5] bg-[#efefef] shadow-[0_14px_44px_8px_rgba(0,0,0,0.42)]">
    <header className="flex h-[43px] shrink-0 items-center bg-[#edf7dc] pb-[3px] pl-3 text-[17px]">
      Grasshopper - unnamed
      <div className="ml-auto flex">
        <button aria-label="Minimize" className="flex h-10 w-[70px] items-center justify-center"><svg viewBox="0 0 16 16" className="size-4" fill="none"><path d="M0 8.500H15" stroke="#000" /></svg></button>
        <button aria-label="Maximize" className="flex h-10 w-[70px] items-center justify-center"><svg viewBox="0 0 16 16" className="size-4" fill="none"><rect x={1} y={1} width={14} height={14} rx={1} stroke="#000" strokeWidth={1.4} /></svg></button>
        <button aria-label="Close" className="flex h-10 w-[70px] items-center justify-center"><svg viewBox="0 0 16 16" className="size-4" fill="none"><path d="M1 1L15 15M15 1L1 15" stroke="#000" strokeWidth={1.3} /></svg></button>
      </div>
    </header>
    <nav className="flex h-[45px] shrink-0 items-center gap-7 bg-gradient-to-r from-[#f0f0f0] to-[#fcfcfc] pl-5 pr-[14px] pt-px text-[17px]">
      {menus.map((m) => (
        <button key={m}>{m}</button>
      ))}
      <span className="ml-auto">unnamed</span>
    </nav>
    <div className="flex h-[33px] shrink-0 gap-px pl-[2px] text-[17px] text-[#6d6d6d]">
      {tabs.map((t) =>
        t === 'Curve' ? (
          <button
            key={t}
            className="relative z-10 -mb-px h-[34px] rounded-t-[10px] border-x border-t border-[#999] bg-gradient-to-b from-white via-white to-[#d6d6d6] px-3 pb-1 text-black before:absolute before:-left-2 before:bottom-0 before:size-2 before:rounded-br-lg before:border-b before:border-r before:border-[#999] before:bg-[#efefef] after:absolute after:-right-2 after:bottom-0 after:size-2 after:rounded-bl-lg after:border-b after:border-l after:border-[#999] after:bg-[#efefef]"
          >
            {t}
          </button>
        ) : (
          <button key={t} className="px-3 pt-px">{t}</button>
        ),
      )}
    </div>
    <Ribbon />
    <div className="ml-px mr-[2px] flex flex-1 flex-col border-l border-t border-[#6b6b6b]">
      <CanvasToolbar />
      <div className="h-[29px] shrink-0 border-b border-black bg-[linear-gradient(to_right,#0003_1px,transparent_1px),repeating-linear-gradient(135deg,#0001_0_1px,transparent_1px_3px),linear-gradient(#b3afa6,#8b8982)] bg-[position:114px_0,0_0,0_0] bg-[size:225px_100%,auto,auto]" />
      <div className="relative h-[602px] shrink-0 bg-[#d4cfc7] bg-[linear-gradient(to_right,#b8b4ad_1px,transparent_1px),linear-gradient(#b8b4ad_1px,transparent_1px)] bg-[position:114px_0,0_74px] bg-[size:225px_75px]">
        <Wires />
        {nodes.map((n) => (
          <Component key={n.id} node={n} />
        ))}
        <Compass />
        <span className="absolute bottom-0 left-0 h-[42px] w-[10px] border border-l-0 border-black bg-[linear-gradient(#c8c8c8,#999_15px,#808080_16px)]" />
      </div>
      <footer className="flex flex-1 justify-end border-t-2 border-white bg-[#efefef] pr-[53px] pt-[5px] text-[15px] text-[#555]">1.0.0008</footer>
    </div>
  </div>
);

/* ---------- Rhino shell ---------- */

const snaps = ['Fin', 'Cerca', 'Punto', 'Med', 'Cen', 'Int', 'Perp', 'Tan', 'Cuad', 'Nodo', 'Vértice', 'Proyectar', 'Desactivar'];

const Sidebar = () => (
  <aside className="flex w-[120px] shrink-0 flex-col overflow-hidden bg-[#e9eaee] text-[17px] text-[#6a6a6a]">
    <div className="flex h-[13px] shrink-0 items-center gap-[5px] border-b border-[#cfd0d6] pl-[54px]">
      {[0, 1, 2, 3, 4, 5].map((i) => (
        <span key={i} className="size-1 shrink-0 rounded-full border border-[#aaa]" />
      ))}
    </div>
    <div className="-ml-[18px] grid shrink-0 grid-cols-[42px_42px_42px]">
      {sideIcons.map((s, i) => (
        <ToolCell key={i} label={`Tool ${i + 1}`} more={!!s.more}>{s.icon}</ToolCell>
      ))}
    </div>
    <div className="mt-[38px] h-[3px] shrink-0 bg-[#d4d5da]" />
    <div className="-ml-[11px] h-[27px] shrink-0 whitespace-nowrap leading-[27px]">Referencias a objetos</div>
    <div className="flex h-[31px] shrink-0 bg-[#d4d5d9]">
      <button aria-label="Snaps" className="w-9 rounded-tr-lg bg-[#e9eaee]">
        <svg viewBox="0 0 36 31" className="h-[31px] w-9" fill="none">
          <circle cx={8} cy={16} r={10} stroke="#888" strokeWidth={1.5} />
          <path d="M10 16H21" stroke="#000" strokeWidth={1.4} />
          <Sq x={8} y={16} />
        </svg>
      </button>
      <button aria-label="Filter" className="w-[54px]">
        <svg viewBox="0 0 54 31" className="h-[31px] w-[54px]" fill="none">
          <path d="M19 8Q26 5 33 8L28 16V23L24 25V16Z" fill="#c9c9c9" stroke="#333" strokeWidth={1.5} />
          <path d="M34 6H37V10M17 21V25H21" stroke="#333" strokeWidth={2.2} />
        </svg>
      </button>
    </div>
    <div className="flex flex-col pt-[6px]">
      {snaps.map((s) => {
        const last = s === 'Desactivar';
        return (
          <label key={s} className={last ? 'mt-[2px] flex h-[26px] items-center text-[#1c1c1c]' : 'flex h-[26px] items-center'}>
            <input type="checkbox" defaultChecked={last} className="peer -ml-3 size-[21px] shrink-0 appearance-none border-2 border-[#bfc6da] checked:bg-white" />
            <svg viewBox="0 0 21 21" className="-ml-[21px] hidden size-[21px] shrink-0 peer-checked:block" fill="none">
              <path d="M5 11L11 17L18 4" stroke="#222" strokeWidth={2.6} />
            </svg>
            <span className="ml-[7px]">{s}</span>
          </label>
        );
      })}
    </div>
  </aside>
);

export default function App() {
  return (
    <div className="relative flex h-screen flex-col overflow-hidden bg-[#e9eaee] font-['Open_Sans','Noto_Sans',sans-serif] text-black">
      <div className="h-[55px] shrink-0 border-t-[3px] border-[#e9eaee] bg-white text-[17px] leading-[27px]">
        <span className="-ml-px">Comando: Grasshopper</span>
      </div>
      <label className="flex h-8 shrink-0 items-center border-b-[3px] border-t border-b-[#d8dade] border-t-[#b9c6d4] bg-white text-[17px] font-bold">
        <span className="-ml-px">Comando:</span>
        <input aria-label="Comando" className="flex-1 bg-transparent outline-none" />
      </label>
      <div className="flex h-[29px] shrink-0 items-center whitespace-nowrap bg-[#d8dade] text-[17px] text-[#777]">
        <button className="h-full bg-[#e9eaee] px-[13px] pt-[2px] text-[#555]">Estándar</button>
        <div className="ml-[1022px] flex gap-[30px] pt-[2px]">
          <button>Superficies</button>
          <button>Sólidos</button>
          <button>Herramientas SubD</button>
          <button>Mallas</button>
          <button>Edición</button>
        </div>
      </div>
      <div className="-ml-[3px] flex h-[52px] shrink-0">
        <ToolCell label="Nuevo" more={false}>
          <path d="M10 6H24L31 13V35H10Z" fill="#e6e6e6" stroke="#000" strokeWidth={1.6} />
          <path d="M24 6V13H31" fill="#fff" stroke="#000" strokeWidth={1.6} />
        </ToolCell>
        <ToolCell label="Abrir" more={false}>
          <path d="M5 33V15L8 12H15L18 16H29V20" fill="#ffd75a" stroke="#000" strokeWidth={1.6} />
          <path d="M5 33L11 20H35L28 33Z" fill="#f5bc3a" stroke="#000" strokeWidth={1.6} />
        </ToolCell>
        <div className="w-[1050px] shrink-0" />
        <RightTools />
      </div>
      <div className="h-[4px] shrink-0 bg-[#d8dade]" />
      <div className="flex min-h-0 flex-1">
        <Sidebar />
        <Viewport />
      </div>
      <GrasshopperWindow />
    </div>
  );
}
